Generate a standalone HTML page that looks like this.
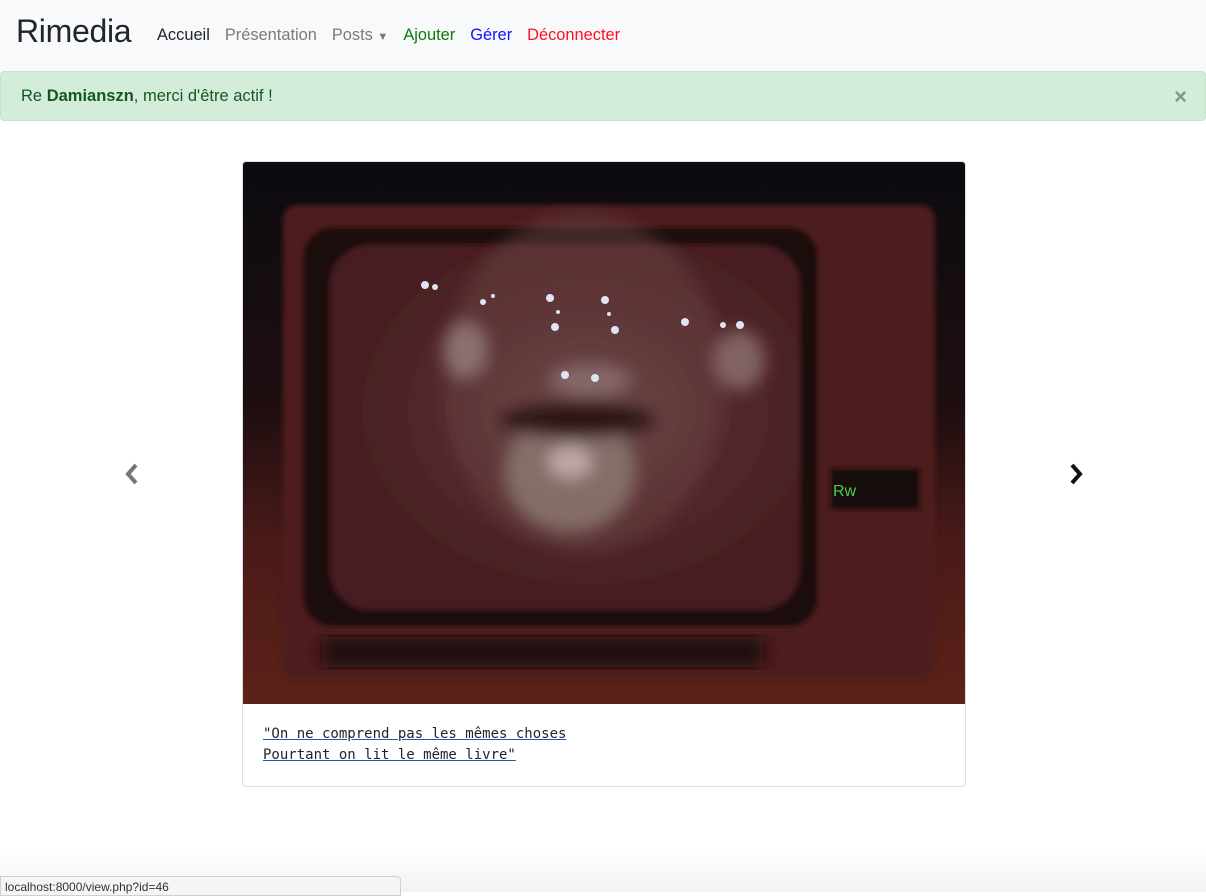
<!DOCTYPE html>
<html><head><meta charset="utf-8"><style>
*{box-sizing:border-box}
body{margin:0;width:1206px;height:892px;overflow:hidden;background:#fff;font-family:"Liberation Sans",sans-serif;position:relative}
.nav{height:71px;background:#f8f9fa;position:relative}
.brand{position:absolute;left:16px;top:13px;font-size:32px;color:#212529;letter-spacing:-0.3px}
.links{position:absolute;left:157px;top:26px;font-size:16.4px}
.links span{margin-right:15px}
.alert{position:absolute;left:0;top:71px;width:1206px;height:50px;background:#d4edda;border:1px solid #c3e6cb;border-radius:4px;color:#155724;font-size:16.5px;padding:15px 20px}
.close{position:absolute;right:18px;top:12px;font-size:22px;font-weight:bold;color:#155724;opacity:.5}
.card{position:absolute;left:242px;top:161px;width:724px;height:626px;border:1px solid #dfdfdf;border-radius:4px;overflow:hidden}
.img{position:absolute;left:0;top:0;width:722px;height:542px}
.cap{position:absolute;left:20px;top:562px;font-family:"DejaVu Sans Mono","Liberation Mono",monospace;font-size:14px;line-height:21px;color:#212529;text-decoration:underline;text-decoration-color:#1a5bb5}
.arr{position:absolute;top:462px}
.status{position:absolute;left:0;top:876px;width:401px;height:20px;background:#f5f5f5;border:1px solid #cfcfcf;border-radius:0 4px 0 0;font-size:12px;color:#333;padding:3px 4px}
.fade{position:absolute;left:0;top:850px;width:1206px;height:42px;background:linear-gradient(#fff,#f2f2f2)}
</style></head><body>
<div class="nav"><div class="brand">Rimedia</div>
<div class="links"><span style="color:#212529">Accueil</span><span style="color:#7a7a7a">Présentation</span><span style="color:#7a7a7a">Posts <span style="font-size:11px;margin:0">▼</span></span><span style="color:#0a7d0a">Ajouter</span><span style="color:#1010ff">Gérer</span><span style="color:#ff1020">Déconnecter</span></div></div>
<div class="alert">Re <b>Damianszn</b>, merci d'être actif !<span class="close">×</span></div>
<div class="fade"></div>
<div class="card">
<svg class="img" viewBox="0 0 722 542" preserveAspectRatio="none">
<defs>
<linearGradient id="bg" x1="0" y1="0" x2="0" y2="1"><stop offset="0" stop-color="#0b0b10"/><stop offset=".45" stop-color="#1e0e10"/><stop offset=".7" stop-color="#4a1a18"/><stop offset="1" stop-color="#5c2218"/></linearGradient>
<radialGradient id="face" cx=".55" cy=".45" r=".55"><stop offset="0" stop-color="#6e4a4a"/><stop offset=".5" stop-color="#552a2e"/><stop offset="1" stop-color="#461c20"/></radialGradient>
<filter id="b"><feGaussianBlur stdDeviation="8"/></filter>
<filter id="b2"><feGaussianBlur stdDeviation="3"/></filter>
</defs>
<rect width="722" height="542" fill="url(#bg)"/>
<g filter="url(#b2)">
<rect x="40" y="43" width="652" height="475" rx="14" fill="#4e1e1c"/>
<rect x="60" y="65" width="515" height="400" rx="30" fill="#1a0c0e"/>
<rect x="87" y="83" width="470" height="365" rx="40" fill="url(#face)"/>
<rect x="587" y="306" width="90" height="42" fill="#150c0c"/>
</g>
<g filter="url(#b)">
<ellipse cx="340" cy="220" rx="140" ry="170" fill="#6a4244" opacity=".5"/>
<ellipse cx="327" cy="310" rx="65" ry="60" fill="#8e7a74" opacity=".8"/>
<ellipse cx="327" cy="300" rx="22" ry="16" fill="#c0a8a8"/>
<ellipse cx="222" cy="188" rx="22" ry="28" fill="#a08a88" opacity=".7"/>
<ellipse cx="497" cy="198" rx="25" ry="30" fill="#a08a88" opacity=".6"/>
<ellipse cx="347" cy="218" rx="40" ry="15" fill="#9a8482" opacity=".6"/>
<ellipse cx="335" cy="258" rx="80" ry="18" fill="#2e1518"/>
</g>
<g fill="#dde6f0"><circle cx="182" cy="123" r="4"/><circle cx="192" cy="125" r="3"/><circle cx="240" cy="140" r="3"/><circle cx="250" cy="134" r="2"/><circle cx="307" cy="136" r="4"/><circle cx="312" cy="165" r="4"/><circle cx="315" cy="150" r="2"/><circle cx="362" cy="138" r="4"/><circle cx="372" cy="168" r="4"/><circle cx="366" cy="152" r="2"/><circle cx="442" cy="160" r="4"/><circle cx="480" cy="163" r="3"/><circle cx="497" cy="163" r="4"/><circle cx="322" cy="213" r="4"/><circle cx="352" cy="216" r="4"/></g>
<text x="590" y="334" font-family="Liberation Sans" font-size="16" fill="#4ccf4c">Rw</text>
<rect x="80" y="475" width="440" height="30" fill="#1a0c0c" filter="url(#b)"/>
</svg>
<div class="cap">"On ne comprend pas les mêmes choses<br>Pourtant on lit le même livre"</div>
</div>
<svg class="arr" style="left:124px" width="16" height="24" viewBox="0 0 16 24"><path d="M12 3 L4 12 L12 21" stroke="#777" stroke-width="4" fill="none"/></svg>
<svg class="arr" style="left:1068px" width="16" height="24" viewBox="0 0 16 24"><path d="M4 3 L12 12 L4 21" stroke="#111" stroke-width="4" fill="none"/></svg>
<div class="status">localhost:8000/view.php?id=46</div>
</body></html>
